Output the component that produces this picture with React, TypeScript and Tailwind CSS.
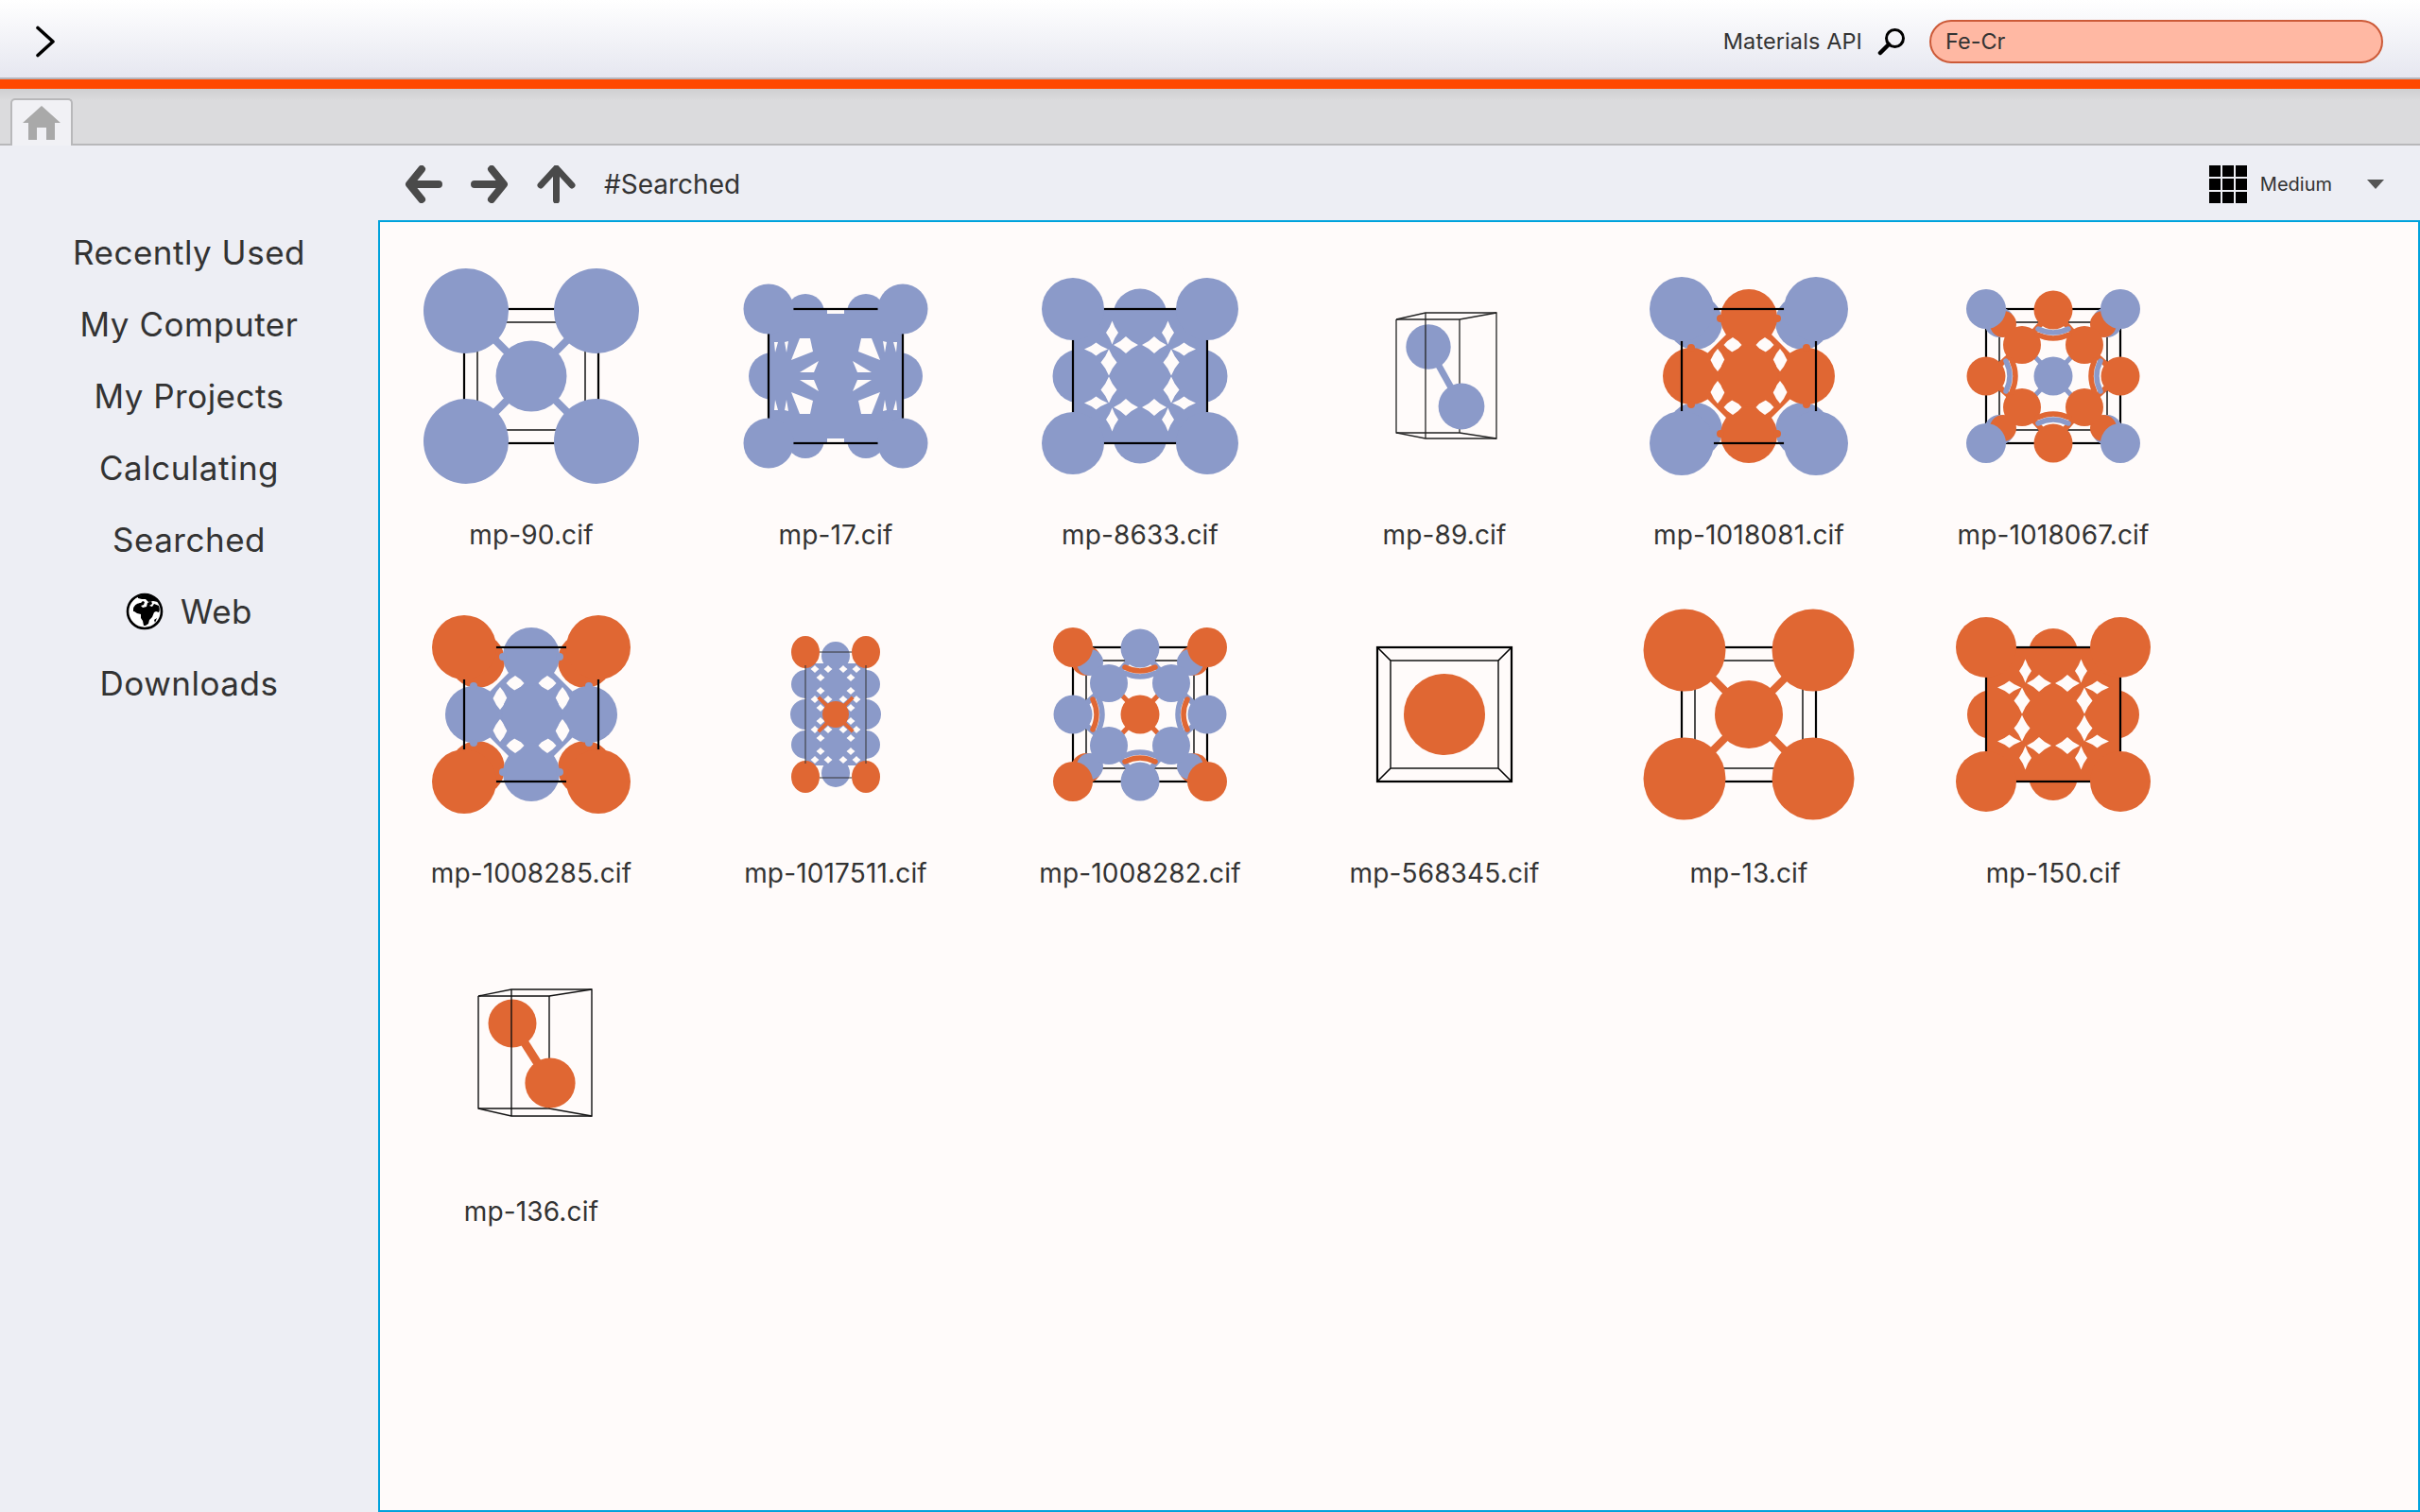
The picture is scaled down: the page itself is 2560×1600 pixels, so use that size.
import React from "react";

const BLUE = "#8b9ac9";
const OR = "#e06733";
const BG = "#fffbfa";

type C = [number, number, number, string, number?];
const Atom = ({ a }: { a: C }) => <ellipse cx={a[0]} cy={a[1]} rx={a[2]} ry={a[4] ?? a[2]} fill={a[3]} />;

const quad = (x: number, y: number): [number, number][] => [[x, y], [-x, y], [x, -y], [-x, -y]];

const Star = ({ x, y, w, h, k = 0.2, fill = BG }: { x: number; y: number; w: number; h: number; k?: number; fill?: string }) => {
  const d = `M${x} ${y - h / 2}Q${x + w * k} ${y - h * k} ${x + w / 2} ${y}Q${x + w * k} ${y + h * k} ${x} ${y + h / 2}Q${x - w * k} ${y + h * k} ${x - w / 2} ${y}Q${x - w * k} ${y - h * k} ${x} ${y - h / 2}Z`;
  return <path d={d} fill={fill} />;
};

const Box = ({ h = 71, w = 2.2 }: { h?: number; w?: number }) => (
  <rect x={-h} y={-h} width={h * 2} height={h * 2} fill="none" stroke="#000" strokeWidth={w} />
);
const InnerBox = () => <rect x={-57} y={-57} width={114} height={114} fill="none" stroke="#222" strokeWidth={1.6} />;

const Svg = ({ children }: { children: React.ReactNode }) => (
  <svg width="300" height="300" viewBox="-150 -150 300 300">{children}</svg>
);

/* corner atoms around a central atom, joined by thin bonds */
const Simple = ({ color, r, cr, d }: { color: string; r: number; cr: number; d: number }) => (
  <Svg>
    <Box />
    <InnerBox />
    {quad(d, d).map(([x, y], i) => (
      <line key={i} x1={0} y1={0} x2={x} y2={y} stroke={color} strokeWidth={8} />
    ))}
    <Atom a={[0, 0, cr, color]} />
    {quad(d, d).map(([x, y], i) => (
      <Atom key={i} a={[x, y, r, color]} />
    ))}
  </Svg>
);

const FOUR: [number, number, number, number][] = [
  [29.5, 46, 13, 25],
  [46.5, 28.5, 25, 14],
  [15, 33, 26, 18],
  [33, 14.5, 17, 28],
];

/* solid cell pierced by sixteen star shaped gaps */
const Solid = ({ color, r, er, d }: { color: string; r: number; er: number; d: number }) => (
  <Svg>
    {[[0, -d], [0, d], [-d, 0], [d, 0]].map(([x, y], i) => (
      <Atom key={i} a={[x, y, er, color]} />
    ))}
    <rect x={-71} y={-71} width={142} height={142} fill={color} />
    {FOUR.flatMap(([x, y, w, h], i) =>
      quad(x, y).map(([a, b], j) => <Star key={`${i}${j}`} x={a} y={b} w={w} h={h} />),
    )}
    <Box />
    {quad(71, 71).map(([x, y], i) => (
      <Atom key={i} a={[x, y, r, color]} />
    ))}
  </Svg>
);

/* two-species cell with a diamond of bonds */
const Diamond = ({ corner, body, r }: { corner: string; body: string; r: number }) => (
  <Svg>
    {quad(57, 57).map(([x, y], i) => (
      <Atom key={i} a={[x, y, 29, corner]} />
    ))}
    <polygon points="0,-68 68,0 0,68 -68,0" fill={body} />
    {[[0, -62], [0, 62], [-61, 0], [61, 0]].map(([x, y], i) => (
      <Atom key={i} a={[x, y, 30, body]} />
    ))}
    {quad(30, 61).map(([x, y], i) => (
      <Atom key={`b${i}`} a={[x, y, 4, body]} />
    ))}
    {quad(61, 30).map(([x, y], i) => (
      <Atom key={`c${i}`} a={[x, y, 4, body]} />
    ))}
    {quad(17, 33).map(([x, y], i) => (
      <Star key={i} x={x} y={y} w={19} h={16} k={0.3} />
    ))}
    {quad(33, 17).map(([x, y], i) => (
      <Star key={i} x={x} y={y} w={15} h={24} k={0.3} />
    ))}
    <Atom a={[0, 0, 31, body]} />
    <Box />
    {quad(71, 71).map(([x, y], i) => (
      <Atom key={i} a={[x, y, r, corner]} />
    ))}
  </Svg>
);

/* ordered cell with small atoms and bent bonds */
const Ordered = ({ a, b }: { a: string; b: string }) => (
  <Svg>
    <Box />
    <InnerBox />
    {quad(57, 57).map(([x, y], i) => (
      <g key={i}>
        <Atom a={[x, y, 16, a]} />
        <Atom a={[x + (x > 0 ? -4 : 4), y + (y > 0 ? -2 : 2), 14, b]} />
      </g>
    ))}
    {quad(16, 17).map(([x, y], i) => (
      <line key={i} x1={0} y1={0} x2={x * 1.4} y2={y * 1.4} stroke={a} strokeWidth={5} />
    ))}
    {quad(33, 33).flatMap(([x, y], i) => [
      <line key={`t${i}`} x1={0} y1={y > 0 ? 70 : -70} x2={x} y2={y} stroke={b} strokeWidth={6} />,
      <line key={`s${i}`} x1={x > 0 ? 70 : -70} y1={0} x2={x} y2={y} stroke={b} strokeWidth={6} />,
      <line key={`c${i}`} x1={x * 1.9} y1={y * 1.9} x2={x} y2={y} stroke={b} strokeWidth={6} />,
    ])}
    {quad(33, 33).map(([x, y], i) => (
      <Atom key={i} a={[x, y, 20, b]} />
    ))}
    {[1, -1].map((s) => (
      <g key={s} fill="none" strokeWidth={5.5} strokeLinecap="round">
        <path d={`M-17 ${s * 44}Q0 ${s * 36} 17 ${s * 44}`} stroke={b} />
        <path d={`M-16 ${s * 50}Q0 ${s * 42} 16 ${s * 50}`} stroke={a} />
        <path d={`M${s * 44} -17Q${s * 36} 0 ${s * 44} 17`} stroke={b} />
        <path d={`M${s * 50} -16Q${s * 42} 0 ${s * 50} 16`} stroke={a} />
      </g>
    ))}
    <Atom a={[0, 0, 20.5, a]} />
    {[[0, -70], [0, 71], [-71, 0], [71, 0]].map(([x, y], i) => (
      <Atom key={i} a={[x, y, 20.5, b]} />
    ))}
    {quad(71, 71).map(([x, y], i) => (
      <Atom key={i} a={[x, y, 21, a]} />
    ))}
  </Svg>
);

const Tall = () => {
  const rows = [-32, 0, 32];
  return (
    <Svg>
      <rect x={-32} y={-54} width={64} height={108} fill={BLUE} />
      {quad(32, 66).map(([x, y], i) => (
        <ellipse key={i} cx={x} cy={y} rx={15} ry={17} fill={OR} />
      ))}
      {[-62, 62].map((y) => (
        <Atom key={y} a={[0, y, 15, BLUE]} />
      ))}
      {rows.map((y) =>
        [-32, 32].map((x) => <Atom key={`${x}${y}`} a={[x, y, y === 0 ? 16 : 15, BLUE]} />),
      )}
      {[
        [22, 48], [8, 48], [16, 39], [16, 25], [22, 16], [8, 16], [16, 7],
      ].flatMap(([x, y], i) =>
        quad(x, y).map(([a, b], j) => <Star key={`${i}${j}`} x={a} y={b} w={9} h={8} k={0.22} />),
      )}
      {quad(13, 13).map(([x, y], i) => (
        <line key={i} x1={0} y1={0} x2={x * 1.4} y2={y * 1.4} stroke={OR} strokeWidth={4} />
      ))}
      <Atom a={[0, 0, 14, OR]} />
      <g stroke="#333" strokeWidth={1}>
        <line x1={-32} y1={-52} x2={-32} y2={52} />
        <line x1={32} y1={-52} x2={32} y2={52} />
        <line x1={-17} y1={-66} x2={17} y2={-66} />
        <line x1={-17} y1={67} x2={17} y2={67} />
      </g>
    </Svg>
  );
};

const Wire = ({ color, scale }: { color: string; scale: "fe" | "cr" }) =>
  scale === "fe" ? (
    <Svg>
      <g transform="translate(-1 0)" fill="none" stroke="#222" strokeWidth={1.3}>
        <polyline points="-50,-60 -19,-67 56,-67 56,66 -19,66 -50,60 -50,-60" />
        <line x1={17} y1={-60} x2={17} y2={60} />
        <polyline points="-50,-60 17,-60 56,-67" />
        <polyline points="-50,60 17,60 56,66" />
      </g>
      <line x1={-17} y1={-31} x2={18} y2={32} stroke={color} strokeWidth={7} />
      <Atom a={[-17, -31, 23.7, color]} />
      <Atom a={[18, 32, 24.4, color]} />
      <line x1={-20} y1={-67} x2={-20} y2={66} stroke="#222" strokeWidth={1.3} />
    </Svg>
  ) : (
    <Svg>
      <g fill="none" stroke="#111" strokeWidth={1.4}>
        <polyline points="-56,-60 -21,-67 64,-67 64,67 -21,67 -56,59 -56,-60" />
        <line x1={19} y1={-60} x2={19} y2={59} />
        <polyline points="-56,-60 19,-60 64,-67" />
        <polyline points="-56,59 19,59 64,67" />
      </g>
      <line x1={-20} y1={-31} x2={20} y2={32} stroke={color} strokeWidth={9} />
      <Atom a={[-20, -31, 25.5, color]} />
      <Atom a={[20, 32, 26.6, color]} />
      <line x1={-21} y1={-67} x2={-21} y2={67} stroke="#111" strokeWidth={1.4} />
    </Svg>
  );

const Seventeen = () => {
  const polys: [number, number][][] = [
    [[-38, -40], [-27, -40], [-24, -26], [-47, -17]],
    [[-18, -16], [-23, -4], [-38, -4]],
    [[-65, -36], [-61, -36], [-64, -25]],
    [[-54, -36], [-50, -37], [-52, -25]],
  ];
  return (
    <Svg>
      {[[-67, 0], [67, 0]].map(([x, y], i) => (
        <Atom key={i} a={[x, y, 25, BLUE]} />
      ))}
      {quad(32, 67).map(([x, y], i) => (
        <Atom key={i} a={[x, y, 20, BLUE]} />
      ))}
      <rect x={-71} y={-71} width={142} height={142} fill={BLUE} />
      {polys.flatMap((p, i) =>
        [[1, 1], [-1, 1], [1, -1], [-1, -1]].map(([sx, sy], j) => (
          <polygon key={`${i}${j}`} fill={BG} points={p.map(([x, y]) => `${x * sx},${y * sy}`).join(" ")} />
        )),
      )}
      <rect x={-9} y={-71} width={18} height={5} fill={BG} />
      <rect x={-9} y={66} width={18} height={5} fill={BG} />
      <Box />
      {quad(71, 71).map(([x, y], i) => (
        <Atom key={i} a={[x, y, 26.5, BLUE]} />
      ))}
    </Svg>
  );
};

const Empty = () => (
  <Svg>
    <Box />
    <InnerBox />
    <g stroke="#000" strokeWidth={1.6}>
      <line x1={-71} y1={-71} x2={-57} y2={-57} />
      <line x1={71} y1={-71} x2={57} y2={-57} />
      <line x1={-71} y1={71} x2={-57} y2={57} />
      <line x1={71} y1={71} x2={57} y2={57} />
    </g>
    <Atom a={[0, 0, 43, OR]} />
  </Svg>
);

const items: [string, React.ReactNode][] = [
  ["mp-90.cif", <Simple color={BLUE} r={45} cr={37.5} d={69} />],
  ["mp-17.cif", <Seventeen />],
  ["mp-8633.cif", <Solid color={BLUE} r={33} er={28.5} d={64} />],
  ["mp-89.cif", <Wire color={BLUE} scale="fe" />],
  ["mp-1018081.cif", <Diamond corner={BLUE} body={OR} r={34} />],
  ["mp-1018067.cif", <Ordered a={BLUE} b={OR} />],
  ["mp-1008285.cif", <Diamond corner={OR} body={BLUE} r={34} />],
  ["mp-1017511.cif", <Tall />],
  ["mp-1008282.cif", <Ordered a={OR} b={BLUE} />],
  ["mp-568345.cif", <Empty />],
  ["mp-13.cif", <Simple color={OR} r={43.5} cr={36} d={68} />],
  ["mp-150.cif", <Solid color={OR} r={32} er={26} d={65} />],
  ["mp-136.cif", <Wire color={OR} scale="cr" />],
];

const Globe = () => (
  <svg width="40" height="40" viewBox="0 0 40 40">
    <circle cx="20" cy="20" r="18" fill="#fff" stroke="#000" strokeWidth="2.6" />
    <path
      fill="#000"
      d="M8 17c1-4 5-6 8-6l2-2 2 1-1 3-3 1 2 2 4-1 1-4 4-2 1 3-3 2 3 1 2-3 5 2c1 3 1 5 0 7l-3-1-2 1-2 5-3 3-1 4-3 2h-2l-1-5-2-3v-4l-4-1-3-2-1 0z"
    />
    <path fill="#000" d="M33 27l-2 5-1-3zM13 4l8-2 9 3 4 5-5-1-5 1-3-3-4 0-4-1z" />
  </svg>
);

const NAV = ["Recently Used", "My Computer", "My Projects", "Calculating", "Searched", "Web", "Downloads"];

export default function App() {
  return (
    <div className="flex h-[1600px] w-[2560px] flex-col overflow-hidden bg-[#edeef4] font-['Inter',sans-serif] text-[#333]">
      <header className="flex h-[84px] items-center border-b-2 border-[#b5b5bb] bg-gradient-to-b from-[#ffffff] to-[#e6e7f0] pt-[5px] pr-[39px] pl-[36px]">
        <svg width="24" height="34" viewBox="0 0 24 34">
          <path d="M4 2.5 L20 17 L4 31.5" fill="none" stroke="#000" strokeWidth="3.6" strokeLinecap="round" strokeLinejoin="round" />
        </svg>
        <span className="ml-auto text-[23.5px] leading-none tracking-[0.1px]">Materials API</span>
        <svg className="ml-[16px]" width="30" height="30" viewBox="0 0 30 30">
          <circle cx="18.5" cy="11.5" r="9" fill="none" stroke="#000" strokeWidth="3" />
          <path d="M12 18 L3 27" stroke="#000" strokeWidth="4.5" strokeLinecap="round" />
        </svg>
        <div className="ml-[25px] flex h-[46px] w-[480px] items-center rounded-[23px] border-2 border-[#cc5a38] bg-[#ffb8a3] pl-[15px] text-[23.5px]">
          Fe-Cr
        </div>
      </header>
      <div className="h-[10px] bg-[#ff4800]" />
      <div className="flex h-[60px] items-end border-b-2 border-[#b8b8ba] bg-[linear-gradient(#cfcfd1,#dbdbdd_12px)] pl-[11px]">
        <div className="relative top-[2px] flex h-[50px] w-[66px] justify-center rounded-t-[5px] border-x-2 border-t-2 border-[#b8b8ba] border-b-0 bg-[#f1f1f5] pt-[6px]">
          <svg width="42" height="38" viewBox="0 0 42 38">
            <path fill="#a9a9a9" d="M21 0 L41 18 L35 18 L35 36 L26 36 L26 23 L16 23 L16 36 L7 36 L7 18 L1 18 Z" />
          </svg>
        </div>
      </div>
      <div className="flex min-h-0 flex-1">
        <nav className="flex w-[400px] flex-col items-center pt-[75px] text-[35px] tracking-[0.5px]">
          {NAV.map((n) => (
            <div key={n} className="flex h-[76px] items-center justify-center leading-none">
              {n === "Web" && (
                <span className="mr-[18px]">
                  <Globe />
                </span>
              )}
              {n}
            </div>
          ))}
        </nav>
        <main className="flex min-w-0 flex-1 flex-col">
          <div className="flex h-[79px] items-center pt-[2px] pl-[28px]">
            <svg width="40" height="40" viewBox="0 0 40 40" className="mr-[30px]">
              <path d="M18 4 L5 20 L18 36 M6 20 H36" fill="none" stroke="#4a4a4a" strokeWidth="8" strokeLinecap="round" strokeLinejoin="round" />
            </svg>
            <svg width="40" height="40" viewBox="0 0 40 40" className="mr-[30px]">
              <path d="M22 4 L35 20 L22 36 M34 20 H4" fill="none" stroke="#4a4a4a" strokeWidth="8" strokeLinecap="round" strokeLinejoin="round" />
            </svg>
            <svg width="41" height="40" viewBox="0 0 41 40">
              <path d="M4 21 L20.5 3 L37 21 M20.5 5 V37" fill="none" stroke="#4a4a4a" strokeWidth="7" strokeLinecap="round" strokeLinejoin="round" />
            </svg>
            <span className="ml-[30px] text-[28px] leading-none">#Searched</span>
            <svg className="ml-auto" width="40" height="40" viewBox="0 0 40 40">
              {[0, 14, 28].flatMap((y) =>
                [0, 14, 28].map((x) => <rect key={`${x}-${y}`} x={x} y={y} width="12" height="12" fill="#000" />),
              )}
            </svg>
            <span className="ml-[14px] text-[20px] leading-none">Medium</span>
            <svg className="mr-[38px] ml-[37px]" width="18" height="10" viewBox="0 0 18 10">
              <path d="M0 0 H18 L9 10 Z" fill="#555" />
            </svg>
          </div>
          <div className="min-h-0 flex-1 border-2 border-[#00a2dc] bg-[#fffbfa] pt-[13px]">
            <div className="grid grid-cols-[repeat(6,320px)] auto-rows-[358px] gap-x-[2px]">
              {items.map(([label, art]) => (
                <div key={label} className="flex flex-col items-center">
                  <div className="h-[301px] w-[300px]">{art}</div>
                  <div className="h-[34px] text-[28px] leading-[34px] tracking-[0.15px]">{label}</div>
                </div>
              ))}
            </div>
          </div>
        </main>
      </div>
    </div>
  );
}
